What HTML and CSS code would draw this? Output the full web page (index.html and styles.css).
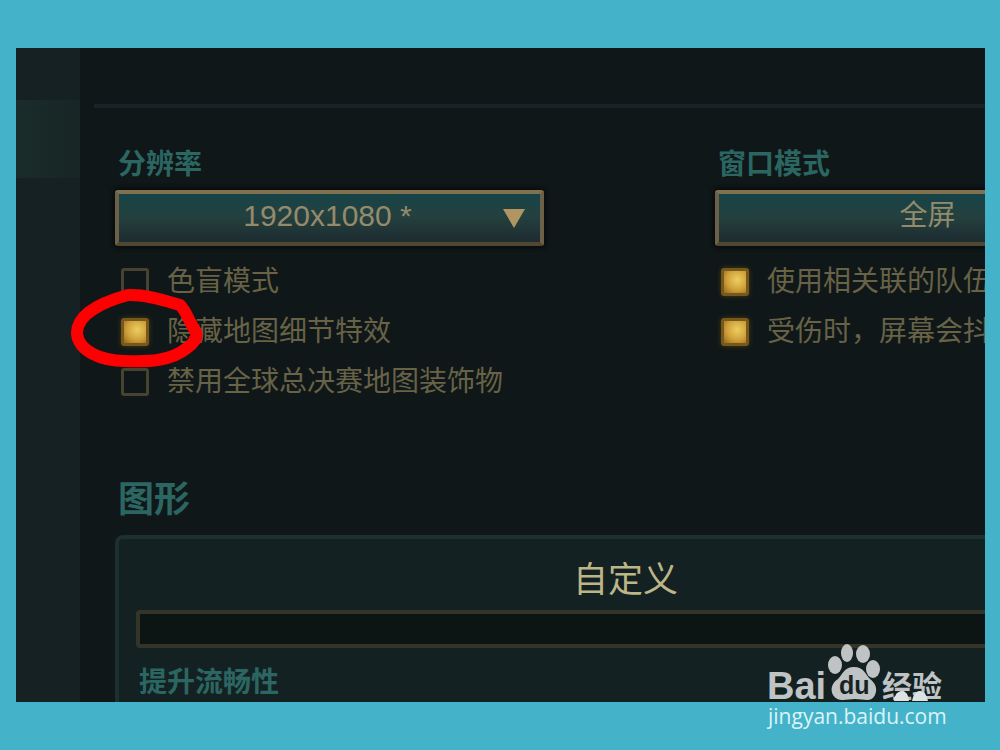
FILE: index.html
```html
<!DOCTYPE html>
<html lang="zh-CN">
<head>
<meta charset="utf-8">
<title>图形设置</title>
<link rel="stylesheet" href="styles.css">
</head>
<body>
<div class="panel">
  <nav class="sidebar"><div class="sidebar-item"></div></nav>
  <main class="content">
    <hr class="rule">
    <div class="sections">
      <div class="columns">
        <section>
          <label class="label" for="resolution">分辨率</label>
          <div class="select-wrap">
            <select class="select" id="resolution"><option>1920x1080 *</option></select>
            <svg class="arrow" viewBox="0 0 24 20" aria-hidden="true"><path d="M1 1H23L12 20Z"/></svg>
          </div>
          <div class="checks">
            <label class="check"><input type="checkbox">色盲模式</label>
            <label class="check"><input type="checkbox" checked>隐藏地图细节特效</label>
            <label class="check"><input type="checkbox">禁用全球总决赛地图装饰物</label>
          </div>
        </section>
        <section>
          <label class="label" for="window-mode">窗口模式</label>
          <div class="select-wrap">
            <select class="select" id="window-mode"><option>全屏</option></select>
          </div>
          <div class="checks">
            <label class="check"><input type="checkbox" checked>使用相关联的队伍</label>
            <label class="check"><input type="checkbox" checked>受伤时，屏幕会抖</label>
          </div>
        </section>
      </div>
      <h2 class="heading">图形</h2>
      <section class="card">
        <h3 class="card-title">自定义</h3>
        <div class="track"></div>
        <p class="label">提升流畅性</p>
      </section>
    </div>
  </main>
  <svg class="marker" viewBox="0 0 136 82" aria-hidden="true"><path d="M58 7C36 13 6 25 7 46C9 63 31 73 55 73C79 74 101 73 117 60Q130 51 125 42C119 34 117 24 110 17C96 13 76 6 58 7Z"/></svg>
</div>
<div class="watermark">
  <svg class="logo" viewBox="0 0 180 60" role="img" aria-label="Bai du 经验">
    <text class="bai" x="-1" y="56">Bai</text>
    <g class="paw">
      <ellipse cx="67" cy="22" rx="7" ry="9"/>
      <ellipse cx="79" cy="10" rx="6" ry="9"/>
      <ellipse cx="95" cy="11" rx="7" ry="9"/>
      <ellipse cx="105" cy="26" rx="7" ry="9"/>
      <path d="M86 24C76 24 75 31 70 36C64 40 62 46 65 52C70 60 79 56 87 56C96 56 103 60 107 52C110 45 107 40 102 36C97 31 96 24 86 24Z"/>
    </g>
    <text class="du" x="71" y="51">du</text>
    <text class="jy" x="114" y="54">经验</text>
    <path class="toes" d="M126 58Q127 48 134 48Q140 48 141 58ZM144 58Q146 48 152 48Q158 48 160 58Z"/>
  </svg>
  <span class="url">jingyan.baidu.com</span>
</div>
</body>
</html>
```
FILE: styles.css
```css
* { box-sizing: border-box; }

body {
  margin: 0;
  height: 100vh;
  padding: 48px 15px 48px 16px;
  display: flex;
  background: #44b3ca;
  font-family: "Liberation Sans", "Noto Sans CJK SC", sans-serif;
  font-size: 28px;
  line-height: 42px;
  color: #686246;
}

.panel {
  position: relative;
  flex: 1;
  display: flex;
  overflow: hidden;
  background: #0f1719;
}

.sidebar {
  flex: 0 0 64px;
  padding-top: 52px;
  background: #152122;
}

.sidebar-item {
  height: 78px;
  background: linear-gradient(90deg, #1a2c2a, #182625);
}

.content {
  flex: 1;
  min-width: 0;
  padding: 56px 0 0 14px;
}

.rule {
  height: 4px;
  margin: 0;
  border: 0;
  background: #192224;
}

.sections {
  width: 1050px;
  padding: 36px 0 0 21px;
}

.columns {
  display: grid;
  grid-template-columns: 429px 429px;
  justify-content: space-between;
}

.label {
  display: block;
  margin: 0;
  padding-left: 3px;
  font-weight: 700;
  color: #2b6662;
}

.select-wrap {
  position: relative;
  margin-top: 4px;
}

.select {
  display: block;
  width: 100%;
  height: 56px;
  padding: 0 4px 4px 0;
  appearance: none;
  border: 4px solid;
  border-color: #81714f #6c6047 #51462f #6c6047;
  border-radius: 3px;
  background: linear-gradient(#164348, #24413f 45%, #1d2b30);
  box-shadow: 0 0 4px 2px #080c0e;
  color: #948b6c;
  font: inherit;
  font-size: 30px;
  text-align: center;
  text-align-last: center;
}

#window-mode { font-size: 28px; }

.arrow {
  position: absolute;
  top: 18px;
  right: 18px;
  width: 24px;
  height: 20px;
  fill: #b09562;
  pointer-events: none;
}

.checks { padding-top: 11px; }

.check {
  display: flex;
  align-items: center;
  gap: 18px;
  height: 50px;
  padding-left: 6px;
  white-space: nowrap;
}

.check input {
  flex: none;
  appearance: none;
  width: 28px;
  height: 28px;
  margin: 0;
  border: 3px solid #464331;
  border-radius: 3px;
}

.check input:checked {
  border-color: #76571c;
  background: radial-gradient(circle at 60% 40%, #edce63, #d0a03a 55%, #93691e);
  box-shadow: 0 0 5px #4d3911;
}

.heading {
  margin: 72px 0 14px;
  padding-left: 3px;
  font-size: 36px;
  font-weight: 700;
  color: #2b6662;
}

.card {
  padding: 20px 17px 24px;
  border: 4px solid #1b302f;
  border-radius: 8px;
  background: #132122;
}

.card-title {
  margin: 0 8px 9px 0;
  font-size: 35px;
  font-weight: 400;
  text-align: center;
  color: #bcb588;
}

.track {
  height: 38px;
  margin-bottom: 14px;
  border: 4px solid #343429;
  border-radius: 4px;
  background: #0c1514;
}

.marker {
  position: absolute;
  top: 240px;
  left: 54px;
  width: 136px;
  height: 82px;
  fill: none;
  stroke: #fd0002;
  stroke-width: 12;
  stroke-linejoin: round;
}

.watermark {
  position: absolute;
  right: 52px;
  bottom: 21px;
  width: 180px;
}

.logo {
  display: block;
  width: 180px;
  height: 60px;
  fill: #bfc3c3;
}

.bai { font-size: 38px; font-weight: 700; }

.du {
  font-size: 25px;
  font-weight: 700;
  fill: #162324;
}

.jy { font-size: 30px; font-weight: 700; }

.toes { fill: #dde2e2; }

.url {
  display: block;
  font-family: "Open Sans", "Noto Sans", sans-serif;
  font-size: 21px;
  line-height: 26px;
  color: #dcf3f7;
}
```
